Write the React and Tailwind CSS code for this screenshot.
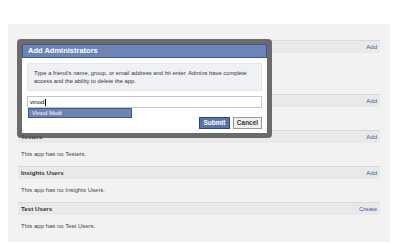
const sections = [
  { title: "Administrators", link: "Add", empty: "This app has no Administrators.", body: "h-[41px]" },
  { title: "Developers", link: "Add", empty: "This app has no Developers.", body: "h-[23px]" },
  { title: "Testers", link: "Add", empty: "This app has no Testers." , body: "h-[23px]" },
  { title: "Insights Users", link: "Add", empty: "This app has no Insights Users.", body: "h-[23px]" },
  { title: "Test Users", link: "Create", empty: "This app has no Test Users.", body: "h-[23px]" },
];

const Section = ({ title, link, empty, body }) => (
  <div>
    <div className="h-[13px] flex items-center justify-between border-t border-[#d9d9d9] bg-[#e9e9e9] px-[3px]">
      <span className="text-[6.2px] font-bold text-[#333]">{title}</span>
      <span className="text-[6px] text-[#3b5998]">{link}</span>
    </div>
    <div className={`${body} flex items-center pl-[3px] text-[6px] text-[#444]`}>
      {empty}
    </div>
  </div>
);

export default function App() {
  return (
    <div className="relative w-[400px] h-[243px] overflow-hidden bg-white font-['Liberation_Sans',Arial,sans-serif]">
      {/* page panel */}
      <div className="ml-[8px] mt-[24px] w-[382px] h-[218px] bg-[#f2f2f2] px-[10px] pt-[16px]">
        {sections.map((s) => (
          <Section key={s.title} {...s} />
        ))}
      </div>

      {/* dialog */}
      <div className="absolute left-[17px] top-[39px] w-[255px] rounded-[4px] bg-[#555]/85 p-[5px]">
        <div className="bg-white">
          <div className="h-[14px] flex items-center bg-[#6d84b4] border border-[#3b5998] px-[5px] text-[7.5px] font-bold text-white">
            Add Administrators
          </div>
          <div className="px-[5px] pt-[5px] pb-[4px]">
            <div className="bg-[#f0f1f5] border border-[#e2e5ec] px-[6px] py-[5px] text-[5.8px] leading-[8px] text-[#333]">
              Type a friend's name, group, or email address and hit enter. Admins have complete
              access and the ability to delete the app.
            </div>
            <div className="relative mt-[5px]">
              <div className="h-[12px] flex items-center border border-[#bdc7d8] bg-white px-[2px] text-[6px] text-black">
                vinod<span className="ml-[0.5px] h-[7px] w-px bg-black" />
              </div>
              <div className="absolute left-[1px] top-[12px] w-[104px] h-[10px] flex items-center bg-[#6d84b4] border border-[#3b5998] px-[3px] text-[6px] text-white">
                Vinod Modi
              </div>
            </div>
            <div className="flex justify-end gap-[3px] mt-[9px]">
              <button className="h-[12px] w-[31px] flex items-center justify-center bg-[#5b74a8] border border-[#29447e] text-[6.5px] font-bold text-white">
                Submit
              </button>
              <button className="h-[12px] w-[29px] flex items-center justify-center bg-[#f0f0f0] border border-[#999] text-[6.5px] font-bold text-[#333]">
                Cancel
              </button>
            </div>
          </div>
        </div>
      </div>
    </div>
  );
}
